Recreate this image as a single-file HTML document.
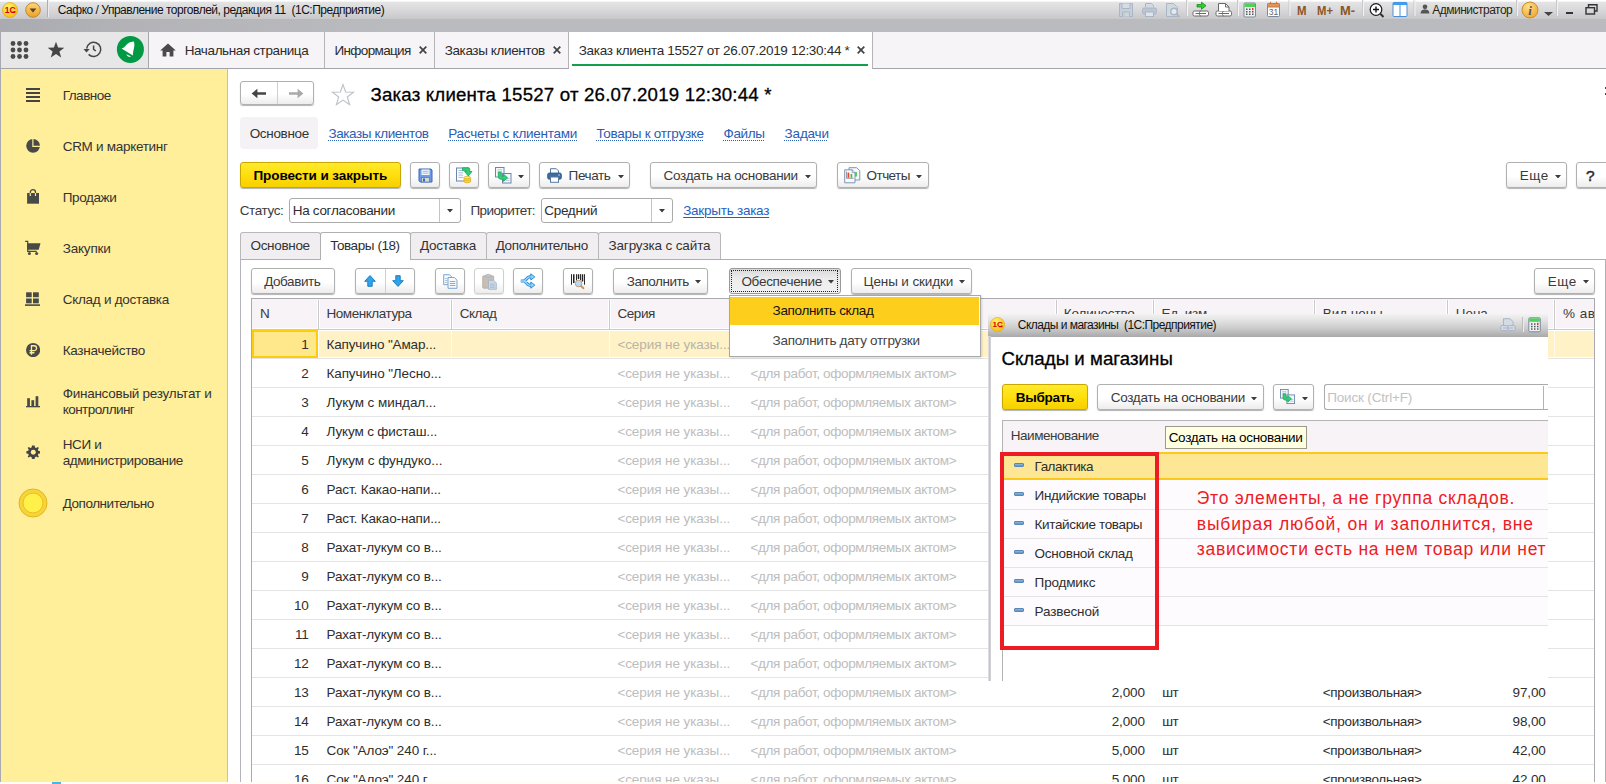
<!DOCTYPE html>
<html lang="ru"><head><meta charset="utf-8"><title>Заказ клиента 15527</title>
<style>
*{box-sizing:border-box;margin:0;padding:0}
html,body{width:1606px;height:784px;overflow:hidden;background:#fff}
body{position:relative;font-family:"Liberation Sans",sans-serif;font-size:13px;color:#2b2b2b}
.a{position:absolute}
.t{position:absolute;white-space:nowrap}
.sep{position:absolute;top:32px;width:1px;height:36px;background:#b5b5b5}
.btn{position:absolute;border:1px solid #b0b0b0;border-radius:3px;background:linear-gradient(#fff 0,#fff 55%,#eeeced 100%);box-shadow:0 1px 1px rgba(0,0,0,.30)}
.yb{background:linear-gradient(#ffea2e 0,#ffe010 45%,#f7d000 100%);border-color:#c9a700}
.inp{position:absolute;border:1px solid #ababab;border-radius:3px;background:#fff}
.rl{position:absolute;height:1px;background:#e4e4e4}
</style></head><body>
<div class="a" style="left:0px;top:0px;width:1606px;height:19px;background:linear-gradient(#fff 0,#fff 1.2px,#e4e4e5 2px,#d9d9db 50%,#c8c8cb 100%)"></div><div class="a" style="left:0px;top:18.5px;width:1606px;height:13.5px;background:linear-gradient(90deg,#a9abb0 0,#b4b4b8 150px,#babbbe 400px,#bbbbbf 100%)"></div><svg class="a" style="left:2px;top:2px" width="16" height="16" viewBox="0 0 16 16"><defs><radialGradient id="g1" cx=".4" cy=".3" r=".8"><stop offset="0" stop-color="#fff36a"/><stop offset="1" stop-color="#f5b90a"/></radialGradient></defs><circle cx="8" cy="8" r="7.5" fill="url(#g1)" stroke="#d9a200" stroke-width=".6"/><text x="8.200" y="10.900" font-family="Liberation Sans,sans-serif" font-weight="bold" font-size="8.500" text-anchor="middle" fill="#e00010" textLength="11" lengthAdjust="spacingAndGlyphs">1С</text><path d="M9.500 10.300 H13.300" stroke="#e00010" stroke-width="1.300"/></svg>
<svg class="a" style="left:25px;top:2px" width="16" height="16" viewBox="0 0 16 16"><defs><linearGradient id="g2" x1="0" y1="0" x2="0" y2="1"><stop offset="0" stop-color="#ffd57a"/><stop offset="1" stop-color="#eea020"/></linearGradient></defs><circle cx="8" cy="8" r="7.3" fill="url(#g2)" stroke="#b98a36" stroke-width="1"/><path d="M4.6 6.6 H11.4 L8 10.4 Z" fill="#5a4326"/></svg><div class="a" style="left:47px;top:0px;width:1px;height:17px;background:#adadb3;box-shadow:1px 0 0 #ececee"></div><div class="t" style="top:3.0px;font-size:12px;line-height:15px;letter-spacing:-0.488px;color:#111;left:57.8px;white-space:pre;">Сафко / Управление торговлей, редакция 11  (1С:Предприятие)</div><div class="a" style="left:0px;top:32px;width:1606px;height:37px;background:#f7f4f7;border-bottom:1px solid #a3a3aa"></div><div class="a" style="left:0px;top:32px;width:149px;height:36px;background:#e7e7e7;border-right:1px solid #a6a6ac;border-left:1px solid #a9a9b0"></div><svg class="a" style="left:10px;top:40px" width="20" height="20" viewBox="0 0 20 20" fill="#4a4a4a"><circle cx="3" cy="3.5" r="2.4"/><circle cx="9.5" cy="3.5" r="2.4"/><circle cx="16" cy="3.5" r="2.4"/><circle cx="3" cy="10" r="2.4"/><circle cx="9.5" cy="10" r="2.4"/><circle cx="16" cy="10" r="2.4"/><circle cx="3" cy="16.5" r="2.4"/><circle cx="9.5" cy="16.5" r="2.4"/><circle cx="16" cy="16.5" r="2.4"/></svg>
<svg class="a" style="left:47px;top:41px" width="18" height="18" viewBox="0 0 18 18"><path d="M9 0.8 L11.1 6.6 L17.3 6.8 L12.4 10.6 L14.2 16.6 L9 13.1 L3.8 16.6 L5.6 10.6 L0.7 6.8 L6.9 6.6 Z" fill="#444"/></svg>
<svg class="a" style="left:83px;top:39px" width="21" height="21" viewBox="0 0 21 21"><path d="M3.600 9.600 A7.100 7.100 0 1 1 5.600 15.400" fill="none" stroke="#454545" stroke-width="1.500"/><path d="M0.500 9.900 L6.700 9.900 L3.500 13.600 Z" fill="#454545"/><path d="M10.600 6.500 V10.400 L12.900 12" fill="none" stroke="#454545" stroke-width="1.500"/></svg>
<svg class="a" style="left:116px;top:35px" width="29" height="29" viewBox="0 0 29 29"><circle cx="14.400" cy="14.400" r="13.500" fill="#009a44"/><path d="M5.500 13.600 C8.500 13 10 9.500 12.500 8 C14.500 7 16 7.200 17 6.600 L18 6.800 C18.700 9.500 18.400 12 17.500 15 C17 17 16.900 19 16.900 20.600 Z" fill="#fff"/><path d="M10.400 19.200 C11.200 21.700 13.500 22.300 15.100 21.400 Z" fill="#fff"/></svg>
<svg class="a" style="left:160px;top:43px" width="16" height="14" viewBox="0 0 16 14"><path d="M8 0.4 L0.2 7.4 H2.6 V13.6 H6.4 V9 H9.6 V13.6 H13.4 V7.4 H15.8 Z" fill="#4a4a4a"/></svg><div class="t" style="top:42.0px;font-size:13.5px;line-height:17px;letter-spacing:-0.389px;color:#2b2b2b;left:184.7px;">Начальная страница</div><div class="sep" style="left:324px"></div><div class="t" style="top:42.0px;font-size:13.5px;line-height:17px;letter-spacing:-0.648px;color:#2b2b2b;left:334.5px;">Информация</div><svg class="a" style="left:418.5px;top:46px" width="8" height="8" viewBox="0 0 8 8"><path d="M0.7 0.7 L7.3 7.3 M7.3 0.7 L0.7 7.3" stroke="#444" stroke-width="1.7"/></svg><div class="sep" style="left:434px"></div><div class="t" style="top:42.0px;font-size:13.5px;line-height:17px;letter-spacing:-0.387px;color:#2b2b2b;left:444.7px;">Заказы клиентов</div><svg class="a" style="left:552.5px;top:46px" width="8" height="8" viewBox="0 0 8 8"><path d="M0.7 0.7 L7.3 7.3 M7.3 0.7 L0.7 7.3" stroke="#444" stroke-width="1.7"/></svg><div class="sep" style="left:568px"></div><div class="a" style="left:569px;top:32px;width:303px;height:37px;background:#fff"></div><div class="t" style="top:42.0px;font-size:13.5px;line-height:17px;letter-spacing:-0.304px;color:#2b2b2b;left:578.7px;">Заказ клиента 15527 от 26.07.2019 12:30:44 *</div><svg class="a" style="left:856.5px;top:46px" width="8" height="8" viewBox="0 0 8 8"><path d="M0.7 0.7 L7.3 7.3 M7.3 0.7 L0.7 7.3" stroke="#444" stroke-width="1.7"/></svg><div class="a" style="left:572px;top:64px;width:296px;height:2px;background:#13a04d"></div><div class="sep" style="left:872px;height:37px"></div><div class="a" style="left:0px;top:69px;width:228px;height:712.5px;background:#ffee9a;border-left:1px solid #a9a9b0;border-right:1px solid #d3c47e"></div><svg class="a" style="left:26px;top:88px" width="14" height="14" viewBox="0 0 14 14" fill="#444"><rect y="0" width="14" height="2"/><rect y="4" width="14" height="2"/><rect y="8" width="14" height="2"/><rect y="12" width="14" height="2"/></svg>
<svg class="a" style="left:25px;top:138px" width="16" height="16" viewBox="0 0 16 16"><circle cx="8.100" cy="7.800" r="6.900" fill="#484a48"/><path d="M7.900 0.500 V8.400 H15.500" fill="none" stroke="#ffee9a" stroke-width="1.200"/></svg>
<svg class="a" style="left:26px;top:188px" width="14" height="17" viewBox="0 0 14 17"><path d="M1.100 5 H13 V15.700 H1.100 Z" fill="#484a48"/><path d="M4.300 5 V4.200 A2.600 2.600 0 0 1 9.500 4.200 V5" fill="none" stroke="#484a48" stroke-width="1.300"/><path d="M4.300 5 V8 M9.500 5 V8" stroke="#ffee9a" stroke-width="1.200"/></svg>
<svg class="a" style="left:24px;top:240px" width="18" height="16" viewBox="0 0 18 16"><path d="M1.100 1.400 H3.700 V11.400 H12.700" fill="none" stroke="#484a48" stroke-width="1.200"/><path d="M3.200 3.200 H16.500 L14.700 9.800 H3.200 Z" fill="#484a48"/><circle cx="5.400" cy="13.600" r="1.500" fill="#484a48"/><circle cx="12.600" cy="13.600" r="1.500" fill="#484a48"/></svg>
<svg class="a" style="left:25px;top:292px" width="16" height="15" viewBox="0 0 16 15" fill="#484a48"><rect x="1.100" y="0.300" width="5.600" height="4.900"/><rect x="8" y="0.300" width="5.800" height="4.900"/><rect x="1.100" y="6.500" width="5.600" height="4.800"/><rect x="8" y="6.500" width="5.800" height="4.800"/><rect x="0" y="12.300" width="15" height="1.600"/></svg>
<svg class="a" style="left:26px;top:342.800px" width="14.200" height="14.200" viewBox="0 0 14 14"><circle cx="7" cy="7" r="7" fill="#484a48"/><path d="M5.400 11.700 V2.700 H8 A2.400 2.400 0 0 1 8 7.500 H3.500 M3.500 9.600 H8.300" fill="none" stroke="#ffee9a" stroke-width="1.300"/></svg>
<svg class="a" style="left:26px;top:395px" width="14" height="13" viewBox="0 0 14 13" fill="#484a48"><rect x="1.200" y="3.200" width="2.700" height="8.400"/><rect x="5.400" y="5.200" width="2.700" height="6.400"/><rect x="9.600" y="1.200" width="2.700" height="10.400"/><rect x="0" y="11" width="14" height="1.300"/></svg>
<svg class="a" style="left:25.700px;top:444.600px" width="14.600" height="14.600" viewBox="0 0 16 16"><path d="M6.6 0.6 H9.4 L9.9 2.7 L11.2 3.3 L13.1 2.2 L14.1 3.2 L13 5 L13.5 6.3 L15.6 6.8 V9.2 L13.5 9.7 L13 11 L14.1 12.8 L13.1 13.8 L11.2 12.7 L9.9 13.3 L9.4 15.4 H6.6 L6.1 13.3 L4.8 12.7 L2.9 13.8 L1.9 12.8 L3 11 L2.5 9.7 L0.4 9.2 V6.8 L2.5 6.3 L3 5 L1.9 3.2 L2.9 2.2 L4.8 3.3 L6.1 2.7 Z" fill="#444"/><circle cx="8" cy="8" r="2.7" fill="#ffee9a"/></svg>
<svg class="a" style="left:18.200px;top:488px" width="30" height="30" viewBox="0 0 30 30"><circle cx="15" cy="15" r="14" fill="#f7d43a" stroke="#e2b61e" stroke-width="1"/><circle cx="15" cy="15" r="10" fill="#fff04a" stroke="#e9bf20" stroke-width="1"/></svg><div class="t" style="top:87.0px;font-size:13.5px;line-height:17px;letter-spacing:-0.496px;color:#333;left:62.7px;">Главное</div><div class="t" style="top:138.0px;font-size:13.5px;line-height:17px;letter-spacing:-0.292px;color:#333;left:62.7px;">CRM и маркетинг</div><div class="t" style="top:189.0px;font-size:13.5px;line-height:17px;letter-spacing:-0.378px;color:#333;left:62.7px;">Продажи</div><div class="t" style="top:240.0px;font-size:13.5px;line-height:17px;letter-spacing:-0.186px;color:#333;left:62.7px;">Закупки</div><div class="t" style="top:291.0px;font-size:13.5px;line-height:17px;letter-spacing:-0.270px;color:#333;left:62.7px;">Склад и доставка</div><div class="t" style="top:342.0px;font-size:13.5px;line-height:17px;letter-spacing:-0.273px;color:#333;left:62.7px;">Казначейство</div><div class="t" style="top:385.0px;font-size:13.5px;line-height:17px;letter-spacing:-0.261px;color:#333;left:62.7px;">Финансовый результат и</div><div class="t" style="top:401.0px;font-size:13.5px;line-height:17px;letter-spacing:-0.549px;color:#333;left:62.7px;">контроллинг</div><div class="t" style="top:436.0px;font-size:13.5px;line-height:17px;letter-spacing:-0.345px;color:#333;left:62.7px;">НСИ и</div><div class="t" style="top:452.0px;font-size:13.5px;line-height:17px;letter-spacing:-0.414px;color:#333;left:62.7px;">администрирование</div><div class="t" style="top:495.0px;font-size:13.5px;line-height:17px;letter-spacing:-0.463px;color:#333;left:62.7px;">Дополнительно</div><div class="btn" style="left:240px;top:81px;width:74px;height:24px;"></div><div class="a" style="left:277px;top:82px;width:1px;height:22px;background:#cfcfcf"></div><svg class="a" style="left:251px;top:88px" width="16" height="11" viewBox="0 0 16 11"><path d="M0.6 5.5 L6.4 0.8 V4.2 H15 V6.8 H6.4 V10.2 Z" fill="#454545"/></svg>
<svg class="a" style="left:288px;top:88px" width="16" height="11" viewBox="0 0 16 11"><path d="M15.4 5.5 L9.6 0.8 V4.2 H1 V6.8 H9.6 V10.2 Z" fill="#a9a9a9"/></svg>
<svg class="a" style="left:331px;top:83px" width="24" height="23" viewBox="0 0 24 23"><path d="M12 1.6 L14.6 9 L22.6 9.2 L16.3 14 L18.6 21.6 L12 17.1 L5.4 21.6 L7.7 14 L1.4 9.2 L9.4 9 Z" fill="#fff" stroke="#b9c1c9" stroke-width="1.1" stroke-linejoin="miter"/></svg><div class="t" style="top:83.0px;font-size:18.67px;line-height:23px;letter-spacing:0.190px;color:#000;left:370.5px;-webkit-text-stroke:.3px #000;">Заказ клиента 15527 от 26.07.2019 12:30:44 *</div><div class="a" style="left:240px;top:116.5px;width:78px;height:32.5px;background:#f5f2f5;border-radius:4px"></div><div class="t" style="top:125.0px;font-size:13.5px;line-height:17px;letter-spacing:-0.320px;color:#333;left:249.7px;">Основное</div><div class="t" style="top:125.0px;font-size:13.5px;line-height:17px;letter-spacing:-0.387px;color:#2a5db5;left:328.4px;text-decoration:underline dotted;text-underline-offset:2px;text-decoration-thickness:1px;">Заказы клиентов</div><div class="t" style="top:125.0px;font-size:13.5px;line-height:17px;letter-spacing:-0.260px;color:#2a5db5;left:448.3px;text-decoration:underline dotted;text-underline-offset:2px;text-decoration-thickness:1px;">Расчеты с клиентами</div><div class="t" style="top:125.0px;font-size:13.5px;line-height:17px;letter-spacing:-0.269px;color:#2a5db5;left:596.4px;text-decoration:underline dotted;text-underline-offset:2px;text-decoration-thickness:1px;">Товары к отгрузке</div><div class="t" style="top:125.0px;font-size:13.5px;line-height:17px;letter-spacing:-0.372px;color:#2a5db5;left:723.5px;text-decoration:underline dotted;text-underline-offset:2px;text-decoration-thickness:1px;">Файлы</div><div class="t" style="top:125.0px;font-size:13.5px;line-height:17px;letter-spacing:-0.182px;color:#2a5db5;left:784.6px;text-decoration:underline dotted;text-underline-offset:2px;text-decoration-thickness:1px;">Задачи</div><div class="btn yb" style="left:240px;top:162px;width:161px;height:26px;"></div><div class="t" style="top:167.0px;font-size:13.5px;line-height:17px;letter-spacing:-0.096px;color:#000;font-weight:bold;left:253.5px;">Провести и закрыть</div><div class="btn" style="left:410px;top:162px;width:30px;height:26px;"></div><div class="btn" style="left:449px;top:162px;width:30px;height:26px;"></div><div class="btn" style="left:488px;top:162px;width:42px;height:26px;"></div><svg class="a" style="left:517.5px;top:174.8px" width="6" height="3.5" viewBox="0 0 6 3.5"><path d="M0 0 H6 L3 3.5 Z" fill="#3c3c3c"/></svg><div class="btn" style="left:539px;top:162px;width:91px;height:26px;"></div><div class="t" style="top:167.0px;font-size:13.5px;line-height:17px;letter-spacing:-0.403px;color:#3a3a3a;left:568.6px;">Печать</div><svg class="a" style="left:617.5px;top:174.8px" width="6" height="3.5" viewBox="0 0 6 3.5"><path d="M0 0 H6 L3 3.5 Z" fill="#3c3c3c"/></svg><div class="btn" style="left:650px;top:162px;width:167px;height:26px;"></div><div class="t" style="top:167.0px;font-size:13.5px;line-height:17px;letter-spacing:-0.292px;color:#3a3a3a;left:663.6px;">Создать на основании</div><svg class="a" style="left:804.5px;top:174.8px" width="6" height="3.5" viewBox="0 0 6 3.5"><path d="M0 0 H6 L3 3.5 Z" fill="#3c3c3c"/></svg><div class="btn" style="left:837px;top:162px;width:92px;height:26px;"></div><div class="t" style="top:167.0px;font-size:13.5px;line-height:17px;letter-spacing:-0.570px;color:#3a3a3a;left:866.6px;">Отчеты</div><svg class="a" style="left:916.3px;top:174.8px" width="6" height="3.5" viewBox="0 0 6 3.5"><path d="M0 0 H6 L3 3.5 Z" fill="#3c3c3c"/></svg><div class="btn" style="left:1506px;top:162px;width:61px;height:26px;"></div><div class="t" style="top:167.0px;font-size:13.5px;line-height:17px;letter-spacing:0.526px;color:#3a3a3a;left:1519.7px;">Еще</div><svg class="a" style="left:1554.6px;top:174.8px" width="6" height="3.5" viewBox="0 0 6 3.5"><path d="M0 0 H6 L3 3.5 Z" fill="#3c3c3c"/></svg><div class="btn" style="left:1576px;top:162px;width:36px;height:26px;"></div><div class="t" style="top:166.0px;font-size:15.5px;line-height:19px;letter-spacing:0.000px;color:#2e2e2e;left:1586.1px;-webkit-text-stroke:.45px #222;">?</div><div class="t" style="top:202.0px;font-size:13.5px;line-height:17px;letter-spacing:-0.386px;color:#3a3a3a;left:239.7px;">Статус:</div><div class="inp" style="left:289px;top:198px;width:172px;height:25px;"></div><div class="a" style="left:439px;top:199px;width:1px;height:23px;background:#c4c4c4"></div><svg class="a" style="left:447px;top:209.3px" width="6" height="3.5" viewBox="0 0 6 3.5"><path d="M0 0 H6 L3 3.5 Z" fill="#3c3c3c"/></svg><div class="t" style="top:202.0px;font-size:13.5px;line-height:17px;letter-spacing:-0.320px;color:#2e2e2e;left:292.8px;">На согласовании</div><div class="t" style="top:202.0px;font-size:13.5px;line-height:17px;letter-spacing:-0.569px;color:#3a3a3a;left:470.4px;">Приоритет:</div><div class="inp" style="left:541px;top:198px;width:132px;height:25px;"></div><div class="a" style="left:651px;top:199px;width:1px;height:23px;background:#c4c4c4"></div><svg class="a" style="left:659px;top:209.3px" width="6" height="3.5" viewBox="0 0 6 3.5"><path d="M0 0 H6 L3 3.5 Z" fill="#3c3c3c"/></svg><div class="t" style="top:202.0px;font-size:13.5px;line-height:17px;letter-spacing:-0.262px;color:#2e2e2e;left:544.2px;">Средний</div><div class="t" style="top:202.0px;font-size:13.5px;line-height:17px;letter-spacing:-0.249px;color:#1f5fc4;left:683.2px;text-decoration:underline;text-underline-offset:2px;">Закрыть заказ</div><div class="a" style="left:240px;top:259px;width:1366px;height:1px;background:#b0b0b0"></div><div class="a" style="left:240px;top:259px;width:1px;height:523px;background:#b4b4bc"></div><div class="a" style="left:1605px;top:259px;width:1px;height:523px;background:#b0b0b0"></div><div class="a" style="left:1604.5px;top:87px;width:1.5px;height:1.5px;background:#444"></div><div class="a" style="left:1604.5px;top:93px;width:1.5px;height:1.5px;background:#444"></div><div class="a" style="left:240px;top:232px;width:81px;height:27px;background:#f1eef1;border:1px solid #b8b8b8;border-bottom:none;border-radius:3px 3px 0 0;"></div><div class="t" style="top:237.0px;font-size:13.5px;line-height:17px;letter-spacing:-0.320px;color:#333;left:250.5px;">Основное</div><div class="a" style="left:410px;top:232px;width:77px;height:27px;background:#f1eef1;border:1px solid #b8b8b8;border-bottom:none;border-radius:3px 3px 0 0;"></div><div class="t" style="top:237.0px;font-size:13.5px;line-height:17px;letter-spacing:-0.252px;color:#333;left:420.0px;">Доставка</div><div class="a" style="left:486px;top:232px;width:113px;height:27px;background:#f1eef1;border:1px solid #b8b8b8;border-bottom:none;border-radius:3px 3px 0 0;"></div><div class="t" style="top:237.0px;font-size:13.5px;line-height:17px;letter-spacing:-0.388px;color:#333;left:495.7px;">Дополнительно</div><div class="a" style="left:598px;top:232px;width:123px;height:27px;background:#f1eef1;border:1px solid #b8b8b8;border-bottom:none;border-radius:3px 3px 0 0;"></div><div class="t" style="top:237.0px;font-size:13.5px;line-height:17px;letter-spacing:-0.144px;color:#333;left:608.5px;">Загрузка с сайта</div><div class="a" style="left:320px;top:232px;width:91px;height:28px;background:#fff;border:1px solid #b0b0b0;border-bottom:none;border-radius:3px 3px 0 0;"></div><div class="t" style="top:237.0px;font-size:13.5px;line-height:17px;letter-spacing:-0.428px;color:#2e2e2e;left:330.2px;">Товары (18)</div><div class="btn" style="left:251px;top:268px;width:83.5px;height:25.5px;"></div><div class="t" style="top:273.0px;font-size:13.5px;line-height:17px;letter-spacing:-0.436px;color:#3a3a3a;left:264.2px;">Добавить</div><div class="btn" style="left:355px;top:268px;width:59.5px;height:25.5px;"></div><div class="a" style="left:384.5px;top:269px;width:1px;height:24px;background:#cfcfcf"></div><div class="btn" style="left:435px;top:268px;width:29.5px;height:25.5px;"></div><div class="btn" style="left:474px;top:268px;width:29.5px;height:25.5px;border-color:#d0d0d0;box-shadow:0 1px 1px rgba(0,0,0,.12)"></div><div class="btn" style="left:513px;top:268px;width:29.5px;height:25.5px;"></div><div class="btn" style="left:563px;top:268px;width:29.5px;height:25.5px;"></div><div class="btn" style="left:613px;top:268px;width:94.5px;height:25.5px;"></div><div class="t" style="top:273.0px;font-size:13.5px;line-height:17px;letter-spacing:-0.483px;color:#3a3a3a;left:626.8px;">Заполнить</div><svg class="a" style="left:695.4px;top:280.3px" width="6" height="3.5" viewBox="0 0 6 3.5"><path d="M0 0 H6 L3 3.5 Z" fill="#3c3c3c"/></svg><div class="a" style="left:728.5px;top:267.5px;width:112px;height:26.5px;border:1px solid #9a9a9a;border-radius:3px;background:linear-gradient(#d9d9d9,#ececec 40%,#f2f2f2)"></div><div class="a" style="left:731px;top:270px;width:107px;height:21.5px;border:1px dotted #222"></div><div class="t" style="top:273.0px;font-size:13.5px;line-height:17px;letter-spacing:-0.285px;color:#3a3a3a;left:741.4px;">Обеспечение</div><svg class="a" style="left:828.2px;top:280.3px" width="6" height="3.5" viewBox="0 0 6 3.5"><path d="M0 0 H6 L3 3.5 Z" fill="#3c3c3c"/></svg><div class="btn" style="left:850.5px;top:268px;width:121px;height:25.5px;"></div><div class="t" style="top:273.0px;font-size:13.5px;line-height:17px;letter-spacing:-0.125px;color:#3a3a3a;left:863.6px;">Цены и скидки</div><svg class="a" style="left:959.4px;top:280.3px" width="6" height="3.5" viewBox="0 0 6 3.5"><path d="M0 0 H6 L3 3.5 Z" fill="#3c3c3c"/></svg><div class="btn" style="left:1534px;top:268px;width:61px;height:25.5px;"></div><div class="t" style="top:273.0px;font-size:13.5px;line-height:17px;letter-spacing:0.526px;color:#3a3a3a;left:1547.7px;">Еще</div><svg class="a" style="left:1582.6px;top:280.3px" width="6" height="3.5" viewBox="0 0 6 3.5"><path d="M0 0 H6 L3 3.5 Z" fill="#3c3c3c"/></svg><div class="a" style="left:251px;top:298px;width:1344px;height:32px;background:#f7f3f7;border:1px solid #a9a9b1;border-bottom:1px solid #cbcbcb;box-shadow:inset 0 -1px 0 #fff"></div><div class="a" style="left:251px;top:329px;width:1px;height:453px;background:#a9a9b1"></div><div class="a" style="left:1594px;top:329px;width:1px;height:453px;background:#a9a9b1"></div><div class="a" style="left:317.5px;top:300px;width:1px;height:29px;background:#c9c9c9;box-shadow:1px 0 0 #fff,-1px 0 0 #fff"></div><div class="a" style="left:450.5px;top:300px;width:1px;height:29px;background:#c9c9c9;box-shadow:1px 0 0 #fff,-1px 0 0 #fff"></div><div class="a" style="left:609px;top:300px;width:1px;height:29px;background:#c9c9c9;box-shadow:1px 0 0 #fff,-1px 0 0 #fff"></div><div class="a" style="left:741.5px;top:300px;width:1px;height:29px;background:#c9c9c9;box-shadow:1px 0 0 #fff,-1px 0 0 #fff"></div><div class="a" style="left:1056px;top:300px;width:1px;height:29px;background:#c9c9c9;box-shadow:1px 0 0 #fff,-1px 0 0 #fff"></div><div class="a" style="left:1153px;top:300px;width:1px;height:29px;background:#c9c9c9;box-shadow:1px 0 0 #fff,-1px 0 0 #fff"></div><div class="a" style="left:1314px;top:300px;width:1px;height:29px;background:#c9c9c9;box-shadow:1px 0 0 #fff,-1px 0 0 #fff"></div><div class="a" style="left:1447px;top:300px;width:1px;height:29px;background:#c9c9c9;box-shadow:1px 0 0 #fff,-1px 0 0 #fff"></div><div class="a" style="left:1554px;top:300px;width:1px;height:29px;background:#c9c9c9;box-shadow:1px 0 0 #fff,-1px 0 0 #fff"></div><div class="t" style="top:305.0px;font-size:13.5px;line-height:17px;letter-spacing:-0.150px;color:#3a3a3a;left:260.0px;">N</div><div class="t" style="top:305.0px;font-size:13.5px;line-height:17px;letter-spacing:-0.454px;color:#3a3a3a;left:326.5px;">Номенклатура</div><div class="t" style="top:305.0px;font-size:13.5px;line-height:17px;letter-spacing:-0.490px;color:#3a3a3a;left:459.7px;">Склад</div><div class="t" style="top:305.0px;font-size:13.5px;line-height:17px;letter-spacing:-0.426px;color:#3a3a3a;left:617.4px;">Серия</div><div class="t" style="top:305.0px;font-size:13.5px;line-height:17px;letter-spacing:-0.164px;color:#3a3a3a;left:1063.8px;">Количество</div><div class="t" style="top:305.0px;font-size:13.5px;line-height:17px;letter-spacing:-0.248px;color:#3a3a3a;left:1161.4px;">Ед. изм.</div><div class="t" style="top:305.0px;font-size:13.5px;line-height:17px;letter-spacing:-0.057px;color:#3a3a3a;left:1322.8px;">Вид цены</div><div class="t" style="top:305.0px;font-size:13.5px;line-height:17px;letter-spacing:-0.116px;color:#3a3a3a;left:1455.7px;">Цена</div><div class="t" style="top:305.0px;font-size:13.5px;line-height:17px;letter-spacing:0.523px;color:#3a3a3a;left:1562.9px;width:31.2px;overflow:hidden;">% авт</div><div class="a" style="left:319px;top:331px;width:1275px;height:26px;background:#fff2c6"></div><div class="a" style="left:450.5px;top:331px;width:1px;height:26px;background:#fffaea"></div><div class="a" style="left:609px;top:331px;width:1px;height:26px;background:#fffaea"></div><div class="a" style="left:741.5px;top:331px;width:1px;height:26px;background:#fffaea"></div><div class="a" style="left:1056px;top:331px;width:1px;height:26px;background:#fffaea"></div><div class="a" style="left:1153px;top:331px;width:1px;height:26px;background:#fffaea"></div><div class="a" style="left:1314px;top:331px;width:1px;height:26px;background:#fffaea"></div><div class="a" style="left:1447px;top:331px;width:1px;height:26px;background:#fffaea"></div><div class="a" style="left:1554px;top:331px;width:1px;height:26px;background:#fffaea"></div><div class="a" style="left:252px;top:330px;width:66px;height:28px;background:#ffe88c;border:2px solid #ffcc0a"></div><div class="rl" style="left:252px;top:358px;width:1342px"></div><div class="rl" style="left:252px;top:387px;width:1342px"></div><div class="rl" style="left:252px;top:416px;width:1342px"></div><div class="rl" style="left:252px;top:445px;width:1342px"></div><div class="rl" style="left:252px;top:474px;width:1342px"></div><div class="rl" style="left:252px;top:503px;width:1342px"></div><div class="rl" style="left:252px;top:532px;width:1342px"></div><div class="rl" style="left:252px;top:561px;width:1342px"></div><div class="rl" style="left:252px;top:590px;width:1342px"></div><div class="rl" style="left:252px;top:619px;width:1342px"></div><div class="rl" style="left:252px;top:648px;width:1342px"></div><div class="rl" style="left:252px;top:677px;width:1342px"></div><div class="rl" style="left:252px;top:706px;width:1342px"></div><div class="rl" style="left:252px;top:735px;width:1342px"></div><div class="rl" style="left:252px;top:764px;width:1342px"></div><div class="rl" style="left:252px;top:793px;width:1342px"></div><div class="t" style="top:336.0px;font-size:13.5px;line-height:17px;letter-spacing:-0.150px;color:#2e2e2e;right:1297.4px;">1</div><div class="t" style="top:336.0px;font-size:13.5px;line-height:17px;letter-spacing:-0.141px;color:#2e2e2e;left:326.5px;">Капучино "Амар...</div><div class="t" style="top:336.0px;font-size:13.5px;line-height:17px;letter-spacing:-0.088px;color:#b9b4a6;left:617.4px;">&lt;серия не указы...</div><div class="t" style="top:365.0px;font-size:13.5px;line-height:17px;letter-spacing:-0.150px;color:#2e2e2e;right:1297.4px;">2</div><div class="t" style="top:365.0px;font-size:13.5px;line-height:17px;letter-spacing:-0.114px;color:#2e2e2e;left:326.5px;">Капучино "Лесно...</div><div class="t" style="top:365.0px;font-size:13.5px;line-height:17px;letter-spacing:-0.088px;color:#bdbdbd;left:617.4px;">&lt;серия не указы...</div><div class="t" style="top:365.0px;font-size:13.5px;line-height:17px;letter-spacing:-0.348px;color:#bdbdbd;left:750.4px;">&lt;для работ, оформляемых актом&gt;</div><div class="t" style="top:394.0px;font-size:13.5px;line-height:17px;letter-spacing:-0.150px;color:#2e2e2e;right:1297.4px;">3</div><div class="t" style="top:394.0px;font-size:13.5px;line-height:17px;letter-spacing:-0.058px;color:#2e2e2e;left:326.5px;">Лукум с миндал...</div><div class="t" style="top:394.0px;font-size:13.5px;line-height:17px;letter-spacing:-0.088px;color:#bdbdbd;left:617.4px;">&lt;серия не указы...</div><div class="t" style="top:394.0px;font-size:13.5px;line-height:17px;letter-spacing:-0.348px;color:#bdbdbd;left:750.4px;">&lt;для работ, оформляемых актом&gt;</div><div class="t" style="top:423.0px;font-size:13.5px;line-height:17px;letter-spacing:-0.150px;color:#2e2e2e;right:1297.4px;">4</div><div class="t" style="top:423.0px;font-size:13.5px;line-height:17px;letter-spacing:-0.135px;color:#2e2e2e;left:326.5px;">Лукум с фисташ...</div><div class="t" style="top:423.0px;font-size:13.5px;line-height:17px;letter-spacing:-0.088px;color:#bdbdbd;left:617.4px;">&lt;серия не указы...</div><div class="t" style="top:423.0px;font-size:13.5px;line-height:17px;letter-spacing:-0.348px;color:#bdbdbd;left:750.4px;">&lt;для работ, оформляемых актом&gt;</div><div class="t" style="top:452.0px;font-size:13.5px;line-height:17px;letter-spacing:-0.150px;color:#2e2e2e;right:1297.4px;">5</div><div class="t" style="top:452.0px;font-size:13.5px;line-height:17px;letter-spacing:-0.038px;color:#2e2e2e;left:326.5px;">Лукум с фундуко...</div><div class="t" style="top:452.0px;font-size:13.5px;line-height:17px;letter-spacing:-0.088px;color:#bdbdbd;left:617.4px;">&lt;серия не указы...</div><div class="t" style="top:452.0px;font-size:13.5px;line-height:17px;letter-spacing:-0.348px;color:#bdbdbd;left:750.4px;">&lt;для работ, оформляемых актом&gt;</div><div class="t" style="top:481.0px;font-size:13.5px;line-height:17px;letter-spacing:-0.150px;color:#2e2e2e;right:1297.4px;">6</div><div class="t" style="top:481.0px;font-size:13.5px;line-height:17px;letter-spacing:-0.141px;color:#2e2e2e;left:326.5px;">Раст. Какао-напи...</div><div class="t" style="top:481.0px;font-size:13.5px;line-height:17px;letter-spacing:-0.088px;color:#bdbdbd;left:617.4px;">&lt;серия не указы...</div><div class="t" style="top:481.0px;font-size:13.5px;line-height:17px;letter-spacing:-0.348px;color:#bdbdbd;left:750.4px;">&lt;для работ, оформляемых актом&gt;</div><div class="t" style="top:510.0px;font-size:13.5px;line-height:17px;letter-spacing:-0.150px;color:#2e2e2e;right:1297.4px;">7</div><div class="t" style="top:510.0px;font-size:13.5px;line-height:17px;letter-spacing:-0.141px;color:#2e2e2e;left:326.5px;">Раст. Какао-напи...</div><div class="t" style="top:510.0px;font-size:13.5px;line-height:17px;letter-spacing:-0.088px;color:#bdbdbd;left:617.4px;">&lt;серия не указы...</div><div class="t" style="top:510.0px;font-size:13.5px;line-height:17px;letter-spacing:-0.348px;color:#bdbdbd;left:750.4px;">&lt;для работ, оформляемых актом&gt;</div><div class="t" style="top:539.0px;font-size:13.5px;line-height:17px;letter-spacing:-0.150px;color:#2e2e2e;right:1297.4px;">8</div><div class="t" style="top:539.0px;font-size:13.5px;line-height:17px;letter-spacing:-0.119px;color:#2e2e2e;left:326.5px;">Рахат-лукум со в...</div><div class="t" style="top:539.0px;font-size:13.5px;line-height:17px;letter-spacing:-0.088px;color:#bdbdbd;left:617.4px;">&lt;серия не указы...</div><div class="t" style="top:539.0px;font-size:13.5px;line-height:17px;letter-spacing:-0.348px;color:#bdbdbd;left:750.4px;">&lt;для работ, оформляемых актом&gt;</div><div class="t" style="top:568.0px;font-size:13.5px;line-height:17px;letter-spacing:-0.150px;color:#2e2e2e;right:1297.4px;">9</div><div class="t" style="top:568.0px;font-size:13.5px;line-height:17px;letter-spacing:-0.119px;color:#2e2e2e;left:326.5px;">Рахат-лукум со в...</div><div class="t" style="top:568.0px;font-size:13.5px;line-height:17px;letter-spacing:-0.088px;color:#bdbdbd;left:617.4px;">&lt;серия не указы...</div><div class="t" style="top:568.0px;font-size:13.5px;line-height:17px;letter-spacing:-0.348px;color:#bdbdbd;left:750.4px;">&lt;для работ, оформляемых актом&gt;</div><div class="t" style="top:597.0px;font-size:13.5px;line-height:17px;letter-spacing:-0.150px;color:#2e2e2e;right:1297.4px;">10</div><div class="t" style="top:597.0px;font-size:13.5px;line-height:17px;letter-spacing:-0.119px;color:#2e2e2e;left:326.5px;">Рахат-лукум со в...</div><div class="t" style="top:597.0px;font-size:13.5px;line-height:17px;letter-spacing:-0.088px;color:#bdbdbd;left:617.4px;">&lt;серия не указы...</div><div class="t" style="top:597.0px;font-size:13.5px;line-height:17px;letter-spacing:-0.348px;color:#bdbdbd;left:750.4px;">&lt;для работ, оформляемых актом&gt;</div><div class="t" style="top:626.0px;font-size:13.5px;line-height:17px;letter-spacing:-0.150px;color:#2e2e2e;right:1297.4px;">11</div><div class="t" style="top:626.0px;font-size:13.5px;line-height:17px;letter-spacing:-0.119px;color:#2e2e2e;left:326.5px;">Рахат-лукум со в...</div><div class="t" style="top:626.0px;font-size:13.5px;line-height:17px;letter-spacing:-0.088px;color:#bdbdbd;left:617.4px;">&lt;серия не указы...</div><div class="t" style="top:626.0px;font-size:13.5px;line-height:17px;letter-spacing:-0.348px;color:#bdbdbd;left:750.4px;">&lt;для работ, оформляемых актом&gt;</div><div class="t" style="top:655.0px;font-size:13.5px;line-height:17px;letter-spacing:-0.150px;color:#2e2e2e;right:1297.4px;">12</div><div class="t" style="top:655.0px;font-size:13.5px;line-height:17px;letter-spacing:-0.119px;color:#2e2e2e;left:326.5px;">Рахат-лукум со в...</div><div class="t" style="top:655.0px;font-size:13.5px;line-height:17px;letter-spacing:-0.088px;color:#bdbdbd;left:617.4px;">&lt;серия не указы...</div><div class="t" style="top:655.0px;font-size:13.5px;line-height:17px;letter-spacing:-0.348px;color:#bdbdbd;left:750.4px;">&lt;для работ, оформляемых актом&gt;</div><div class="t" style="top:684.0px;font-size:13.5px;line-height:17px;letter-spacing:-0.150px;color:#2e2e2e;right:1297.4px;">13</div><div class="t" style="top:684.0px;font-size:13.5px;line-height:17px;letter-spacing:-0.119px;color:#2e2e2e;left:326.5px;">Рахат-лукум со в...</div><div class="t" style="top:684.0px;font-size:13.5px;line-height:17px;letter-spacing:-0.088px;color:#bdbdbd;left:617.4px;">&lt;серия не указы...</div><div class="t" style="top:684.0px;font-size:13.5px;line-height:17px;letter-spacing:-0.348px;color:#bdbdbd;left:750.4px;">&lt;для работ, оформляемых актом&gt;</div><div class="t" style="top:684.0px;font-size:13.5px;line-height:17px;letter-spacing:-0.150px;color:#2e2e2e;right:461.2px;">2,000</div><div class="t" style="top:684.0px;font-size:13.5px;line-height:17px;letter-spacing:-0.396px;color:#2e2e2e;left:1162.2px;">шт</div><div class="t" style="top:684.0px;font-size:13.5px;line-height:17px;letter-spacing:-0.325px;color:#2e2e2e;left:1322.8px;">&lt;произвольная&gt;</div><div class="t" style="top:684.0px;font-size:13.5px;line-height:17px;letter-spacing:-0.150px;color:#2e2e2e;right:60.4px;">97,00</div><div class="t" style="top:713.0px;font-size:13.5px;line-height:17px;letter-spacing:-0.150px;color:#2e2e2e;right:1297.4px;">14</div><div class="t" style="top:713.0px;font-size:13.5px;line-height:17px;letter-spacing:-0.119px;color:#2e2e2e;left:326.5px;">Рахат-лукум со в...</div><div class="t" style="top:713.0px;font-size:13.5px;line-height:17px;letter-spacing:-0.088px;color:#bdbdbd;left:617.4px;">&lt;серия не указы...</div><div class="t" style="top:713.0px;font-size:13.5px;line-height:17px;letter-spacing:-0.348px;color:#bdbdbd;left:750.4px;">&lt;для работ, оформляемых актом&gt;</div><div class="t" style="top:713.0px;font-size:13.5px;line-height:17px;letter-spacing:-0.150px;color:#2e2e2e;right:461.2px;">2,000</div><div class="t" style="top:713.0px;font-size:13.5px;line-height:17px;letter-spacing:-0.396px;color:#2e2e2e;left:1162.2px;">шт</div><div class="t" style="top:713.0px;font-size:13.5px;line-height:17px;letter-spacing:-0.325px;color:#2e2e2e;left:1322.8px;">&lt;произвольная&gt;</div><div class="t" style="top:713.0px;font-size:13.5px;line-height:17px;letter-spacing:-0.150px;color:#2e2e2e;right:60.4px;">98,00</div><div class="t" style="top:742.0px;font-size:13.5px;line-height:17px;letter-spacing:-0.150px;color:#2e2e2e;right:1297.4px;">15</div><div class="t" style="top:742.0px;font-size:13.5px;line-height:17px;letter-spacing:-0.120px;color:#2e2e2e;left:326.5px;">Сок "Алоэ" 240 г...</div><div class="t" style="top:742.0px;font-size:13.5px;line-height:17px;letter-spacing:-0.088px;color:#bdbdbd;left:617.4px;">&lt;серия не указы...</div><div class="t" style="top:742.0px;font-size:13.5px;line-height:17px;letter-spacing:-0.348px;color:#bdbdbd;left:750.4px;">&lt;для работ, оформляемых актом&gt;</div><div class="t" style="top:742.0px;font-size:13.5px;line-height:17px;letter-spacing:-0.150px;color:#2e2e2e;right:461.2px;">5,000</div><div class="t" style="top:742.0px;font-size:13.5px;line-height:17px;letter-spacing:-0.396px;color:#2e2e2e;left:1162.2px;">шт</div><div class="t" style="top:742.0px;font-size:13.5px;line-height:17px;letter-spacing:-0.325px;color:#2e2e2e;left:1322.8px;">&lt;произвольная&gt;</div><div class="t" style="top:742.0px;font-size:13.5px;line-height:17px;letter-spacing:-0.150px;color:#2e2e2e;right:60.4px;">42,00</div><div class="t" style="top:771.0px;font-size:13.5px;line-height:17px;letter-spacing:-0.150px;color:#2e2e2e;right:1297.4px;">16</div><div class="t" style="top:771.0px;font-size:13.5px;line-height:17px;letter-spacing:-0.120px;color:#2e2e2e;left:326.5px;">Сок "Алоэ" 240 г...</div><div class="t" style="top:771.0px;font-size:13.5px;line-height:17px;letter-spacing:-0.088px;color:#bdbdbd;left:617.4px;">&lt;серия не указы...</div><div class="t" style="top:771.0px;font-size:13.5px;line-height:17px;letter-spacing:-0.348px;color:#bdbdbd;left:750.4px;">&lt;для работ, оформляемых актом&gt;</div><div class="t" style="top:771.0px;font-size:13.5px;line-height:17px;letter-spacing:-0.150px;color:#2e2e2e;right:461.2px;">5,000</div><div class="t" style="top:771.0px;font-size:13.5px;line-height:17px;letter-spacing:-0.396px;color:#2e2e2e;left:1162.2px;">шт</div><div class="t" style="top:771.0px;font-size:13.5px;line-height:17px;letter-spacing:-0.325px;color:#2e2e2e;left:1322.8px;">&lt;произвольная&gt;</div><div class="t" style="top:771.0px;font-size:13.5px;line-height:17px;letter-spacing:-0.150px;color:#2e2e2e;right:60.4px;">42,00</div><div class="a" style="left:728.5px;top:294.5px;width:252px;height:62px;background:#fff;border:1px solid #a8a8a8;box-shadow:1px 1px 2px rgba(0,0,0,.15)"></div><div class="a" style="left:730.3px;top:296.5px;width:248.5px;height:28.2px;background:#fdce1c"></div><div class="t" style="top:302.0px;font-size:13.5px;line-height:17px;letter-spacing:-0.349px;color:#111;left:772.6px;">Заполнить склад</div><div class="t" style="top:332.0px;font-size:13.5px;line-height:17px;letter-spacing:-0.300px;color:#444;left:772.6px;">Заполнить дату отгрузки</div><div class="a" style="left:988px;top:314px;width:560px;height:367px;background:#fff"></div><div class="a" style="left:988px;top:314px;width:560px;height:22.5px;background:linear-gradient(#f3f3f3 0,#e4e4e4 25%,#cdcdcd 60%,#a9a9ab 100%)"></div><div class="a" style="left:988px;top:336px;width:3px;height:345px;background:linear-gradient(90deg,#e9e9ec,#c4c4cc 50%,#d8d8dc)"></div><svg class="a" style="left:990px;top:316.8px" width="15" height="15" viewBox="0 0 16 16"><circle cx="8" cy="8" r="7.5" fill="url(#g1)" stroke="#e0aa00" stroke-width=".6"/><text x="8.200" y="10.900" font-family="Liberation Sans,sans-serif" font-weight="bold" font-size="8.500" text-anchor="middle" fill="#e00010" textLength="11" lengthAdjust="spacingAndGlyphs">1С</text><path d="M9.500 10.300 H13.300" stroke="#e00010" stroke-width="1.300"/></svg><div class="t" style="top:318.0px;font-size:12px;line-height:15px;letter-spacing:-0.539px;color:#111;left:1017.8px;white-space:pre;">Склады и магазины  (1С:Предприятие)</div><div class="t" style="top:347.0px;font-size:18.67px;line-height:23px;letter-spacing:0.050px;color:#000;left:1001.4px;-webkit-text-stroke:.3px #000;">Склады и магазины</div><div class="btn yb" style="left:1002px;top:384px;width:86px;height:26px;"></div><div class="t" style="top:389.0px;font-size:13.5px;line-height:17px;letter-spacing:-0.279px;color:#000;font-weight:bold;left:1015.7px;">Выбрать</div><div class="btn" style="left:1097px;top:384px;width:167px;height:26px;"></div><div class="t" style="top:389.0px;font-size:13.5px;line-height:17px;letter-spacing:-0.286px;color:#3a3a3a;left:1110.7px;">Создать на основании</div><svg class="a" style="left:1251.3px;top:396.8px" width="6" height="3.5" viewBox="0 0 6 3.5"><path d="M0 0 H6 L3 3.5 Z" fill="#3c3c3c"/></svg><div class="btn" style="left:1273px;top:384px;width:41px;height:26px;"></div><svg class="a" style="left:1301.5px;top:396.8px" width="6" height="3.5" viewBox="0 0 6 3.5"><path d="M0 0 H6 L3 3.5 Z" fill="#3c3c3c"/></svg><div class="inp" style="left:1324px;top:384px;width:224px;height:26px;border-radius:3px 0 0 3px;border-right:none"></div><div class="a" style="left:1543px;top:385.5px;width:1px;height:23.5px;background:#b4b4b4"></div><div class="t" style="top:389.0px;font-size:13.5px;line-height:17px;letter-spacing:-0.166px;color:#c2c2c2;left:1327.2px;">Поиск (Ctrl+F)</div><div class="a" style="left:1002px;top:420px;width:546px;height:32px;background:#f7f3f7;border-top:1px solid #b4b4b4;border-left:1px solid #b4b4b4"></div><div class="a" style="left:1002px;top:452px;width:1px;height:229px;background:#b4b4b4"></div><div class="t" style="top:427.0px;font-size:13.5px;line-height:17px;letter-spacing:-0.452px;color:#3a3a3a;left:1010.7px;">Наименование</div><div class="a" style="left:1003px;top:480px;width:545px;height:145px;background:#fefbfe"></div><div class="a" style="left:1003px;top:452px;width:545px;height:28px;background:#fee794;border-top:2.5px solid #fdc81a;border-bottom:2.5px solid #fdc81a"></div><div class="rl" style="left:1003px;top:509px;width:545px;background:#e6e3e6"></div><div class="rl" style="left:1003px;top:538px;width:545px;background:#e6e3e6"></div><div class="rl" style="left:1003px;top:567px;width:545px;background:#e6e3e6"></div><div class="rl" style="left:1003px;top:596px;width:545px;background:#e6e3e6"></div><div class="rl" style="left:1003px;top:625px;width:545px;background:#e6e3e6"></div><div class="a" style="left:1013.7px;top:462.8px;width:10.5px;height:4.5px;background:linear-gradient(#8fb8e0,#5f93c6);border:1px solid #5b87b5;border-radius:1px"></div><div class="t" style="top:458.0px;font-size:13.5px;line-height:17px;letter-spacing:-0.517px;color:#2e2e2e;left:1034.6px;">Галактика</div><div class="a" style="left:1013.7px;top:491.6px;width:10.5px;height:4.5px;background:linear-gradient(#8fb8e0,#5f93c6);border:1px solid #5b87b5;border-radius:1px"></div><div class="t" style="top:487.0px;font-size:13.5px;line-height:17px;letter-spacing:-0.349px;color:#2e2e2e;left:1034.6px;">Индийские товары</div><div class="a" style="left:1013.7px;top:520.6px;width:10.5px;height:4.5px;background:linear-gradient(#8fb8e0,#5f93c6);border:1px solid #5b87b5;border-radius:1px"></div><div class="t" style="top:516.0px;font-size:13.5px;line-height:17px;letter-spacing:-0.354px;color:#2e2e2e;left:1034.6px;">Китайские товары</div><div class="a" style="left:1013.7px;top:549.6px;width:10.5px;height:4.5px;background:linear-gradient(#8fb8e0,#5f93c6);border:1px solid #5b87b5;border-radius:1px"></div><div class="t" style="top:545.0px;font-size:13.5px;line-height:17px;letter-spacing:-0.261px;color:#2e2e2e;left:1034.6px;">Основной склад</div><div class="a" style="left:1013.7px;top:578.6px;width:10.5px;height:4.5px;background:linear-gradient(#8fb8e0,#5f93c6);border:1px solid #5b87b5;border-radius:1px"></div><div class="t" style="top:574.0px;font-size:13.5px;line-height:17px;letter-spacing:-0.160px;color:#2e2e2e;left:1034.6px;">Продмикс</div><div class="a" style="left:1013.7px;top:607.6px;width:10.5px;height:4.5px;background:linear-gradient(#8fb8e0,#5f93c6);border:1px solid #5b87b5;border-radius:1px"></div><div class="t" style="top:603.0px;font-size:13.5px;line-height:17px;letter-spacing:-0.146px;color:#2e2e2e;left:1034.6px;">Развесной</div><div class="a" style="left:1165px;top:426px;width:141.5px;height:23px;background:#ffffe1;border:1px solid #9a9a88"></div><div class="t" style="top:429.0px;font-size:13.5px;line-height:17px;letter-spacing:-0.313px;color:#000;left:1168.7px;">Создать на основании</div><div class="a" style="left:1000.3px;top:451.8px;width:158.6px;height:198.6px;border:4.8px solid #ed1c24"></div><div class="t" style="top:487.0px;font-size:17.5px;line-height:22px;letter-spacing:0.747px;color:#ed1c24;left:1196.8px;">Это элементы, а не группа складов.</div><div class="t" style="top:513.0px;font-size:17.5px;line-height:22px;letter-spacing:0.842px;color:#ed1c24;left:1196.8px;">выбирая любой, он и заполнится, вне</div><div class="t" style="top:538.0px;font-size:17.5px;line-height:22px;letter-spacing:0.745px;color:#ed1c24;left:1196.8px;">зависимости есть на нем товар или нет</div><div class="a" style="left:0px;top:781.5px;width:1606px;height:2.5px;background:#fffdf6"></div><div class="a" style="left:52px;top:781.5px;width:9px;height:2.5px;background:#4db4e8"></div><div class="a" style="left:61px;top:781.5px;width:10px;height:2.5px;background:#fff"></div><svg class="a" style="left:1118px;top:0" width="300" height="20" viewBox="0 0 300 20">
<g fill="none" stroke="#aab6c6" stroke-width="1">
<path d="M1.5 3.5 H14.5 V16.5 H1.5 Z" fill="#c6cfda"/><path d="M4 3.5 V8.5 H12 V3.5" fill="#d5dce4"/><path d="M4.5 16.5 V12 H11.5 V16.5" fill="#cfd8d6"/><path d="M6 13.5 V15.5" />
<path d="M27.5 7 V3.5 H33.5 L35.5 5.5 V7" fill="#d3dae2"/><rect x="24.5" y="8" width="14" height="6" rx="1.5" fill="#bcc6d2"/><rect x="27.5" y="12" width="8" height="4.5" fill="#dfe4ea"/>
<path d="M48.500 3.5 H55.500 L59.500 7.500 V16.5 H48.500 Z" fill="#d0d8e0"/><circle cx="56" cy="11.5" r="3.2" fill="#e6eaee" stroke-width="1.4"/><path d="M58.500 14 L61.500 17" stroke-width="1.8"/>
</g>
<path d="M68.500 0 V16" stroke="#c9c9c9"/><path d="M69.500 0 V16" stroke="#f2f2f2"/>
<g fill="#fff" stroke="#6a6a6a" stroke-width="1"><rect x="75" y="11" width="9" height="5" rx="1.5"/><rect x="81.500" y="11" width="9" height="5" rx="1.5"/><rect x="98" y="11" width="9" height="5" rx="1.5"/><rect x="104.500" y="11" width="9" height="5" rx="1.5"/></g>
<g stroke="#6a6a6a" stroke-width="1"><path d="M77.500 13.500 H88"/><path d="M100.500 13.500 H111"/></g>
<path d="M79 4.500 H83.500 V2.200 L88 5.700 L83.500 9.200 V7 H79 Z" fill="#2fd12f" stroke="#158a15" stroke-width=".8"/>
<path d="M100.500 11 V3.500 H107.500 L111 7 V11" fill="#fff" stroke="#6a6a6a"/><path d="M107.500 3.500 V7 H111" fill="none" stroke="#6a6a6a"/>
<path d="M119.500 0 V16" stroke="#c9c9c9"/><path d="M120.500 0 V16" stroke="#f2f2f2"/>
<rect x="126" y="3" width="11.500" height="14" rx="1" fill="#eef1f4" stroke="#7b8a9a"/><rect x="126.500" y="3.500" width="10.500" height="3.500" fill="#4fd05a"/>
<g fill="#555"><rect x="128" y="8.500" width="1.500" height="1.500"/><rect x="131" y="8.500" width="1.500" height="1.500"/><rect x="128" y="11" width="1.500" height="1.500"/><rect x="131" y="11" width="1.500" height="1.500"/><rect x="134" y="11" width="1.500" height="1.500"/><rect x="128" y="13.500" width="1.500" height="1.500"/><rect x="131" y="13.500" width="1.500" height="1.500"/><rect x="134" y="13.500" width="1.500" height="1.500"/></g><rect x="134" y="8" width="1.500" height="2.200" fill="#f03030"/>
<rect x="149.500" y="3.500" width="12" height="13" rx="1" fill="#fff" stroke="#7b8a9a"/><path d="M149.500 7 V4.500 Q149.500 3.500 150.500 3.500 H160.500 Q161.500 3.500 161.500 4.500 V7 Z" fill="#e0935a" stroke="#c77a42"/><path d="M152.500 1.800 V4 M158.500 1.800 V4" stroke="#c77a42" stroke-width="1.200"/>
<text x="155.500" y="14.500" font-size="8.500" text-anchor="middle" fill="#666" font-family="Liberation Sans,sans-serif">31</text>
<path d="M171 0 V16" stroke="#c9c9c9"/><path d="M172 0 V16" stroke="#f2f2f2"/>
<g font-family="Liberation Sans,sans-serif" font-weight="bold" font-size="12.500" fill="#8a5528"><text x="179" y="15" textLength="9.500" lengthAdjust="spacingAndGlyphs">M</text><text x="199" y="15" textLength="16" lengthAdjust="spacingAndGlyphs">M+</text><text x="222" y="15" textLength="15" lengthAdjust="spacingAndGlyphs">M-</text></g>
<path d="M244.500 0 V16" stroke="#c9c9c9"/><path d="M245.500 0 V16" stroke="#f2f2f2"/>
<circle cx="258" cy="9.500" r="5.800" fill="#fff" stroke="#222" stroke-width="1.300"/><path d="M255 9.500 H261 M258 6.500 V12.500" stroke="#111" stroke-width="1.400"/><path d="M262.300 13.800 L265.500 17" stroke="#333" stroke-width="2"/>
<rect x="275" y="2.500" width="14" height="14" rx="1" fill="#fff" stroke="#4a8fd6"/><rect x="275" y="2.500" width="14" height="2.500" fill="#3d9df2"/><path d="M282 5 V16.500" stroke="#4a8fd6"/>
<path d="M296 0 V16" stroke="#c9c9c9"/><path d="M297 0 V16" stroke="#f2f2f2"/>
</svg><svg class="a" style="left:1420px;top:4px" width="10" height="10" viewBox="0 0 12 12"><circle cx="6" cy="3.400" r="2.800" fill="#555"/><path d="M0.800 11.500 C0.800 7.500 3 6.500 6 6.500 C9 6.500 11.200 7.500 11.200 11.500 Z" fill="#555"/></svg><div class="t" style="top:3.0px;font-size:12px;line-height:15px;letter-spacing:-0.512px;color:#2a2410;left:1432.3px;">Администратор</div><div class="a" style="left:1516px;top:0px;width:1px;height:16px;background:#c9c9c9;box-shadow:1px 0 0 #f2f2f2"></div><svg class="a" style="left:1521px;top:1px" width="18" height="18" viewBox="0 0 18 18"><defs><radialGradient id="g3" cx=".4" cy=".3" r=".8"><stop offset="0" stop-color="#ffe08a"/><stop offset="1" stop-color="#eea228"/></radialGradient></defs><circle cx="9" cy="9" r="8" fill="url(#g3)" stroke="#c99030" stroke-width="1"/><text x="9" y="13.500" font-family="Liberation Serif,serif" font-style="italic" font-weight="bold" font-size="13" text-anchor="middle" fill="#555">i</text></svg><svg class="a" style="left:1544px;top:12px" width="9" height="4" viewBox="0 0 9 4"><path d="M0 0 H9 L4.500 4 Z" fill="#444"/></svg><div class="a" style="left:1556px;top:0px;width:1px;height:16px;background:#c9c9c9;box-shadow:1px 0 0 #f2f2f2"></div><div class="a" style="left:1566px;top:12px;width:7px;height:2px;background:#333"></div><svg class="a" style="left:1585px;top:4px" width="13" height="11" viewBox="0 0 13 11"><path d="M3.500 3 V0.800 H12 V7 H9.500" fill="none" stroke="#333" stroke-width="1.400"/><rect x="1" y="3.700" width="8.500" height="6.300" fill="none" stroke="#333" stroke-width="1.400"/></svg><svg class="a" style="left:417.5px;top:167.5px" width="15" height="15" viewBox="0 0 15 15"><path d="M1 1 H13 L14 2 V14 H2.200 L1 12.800 Z" fill="#6c9de4" stroke="#3b69b4" stroke-width="1"/><rect x="3.500" y="1.500" width="8" height="5.500" fill="#f4f8fd"/><path d="M4.500 3.300 H10.500 M4.500 5.200 H10.500" stroke="#8fb2e6" stroke-width=".9"/><rect x="3.500" y="9.500" width="8" height="4.500" fill="#d6d6d6" stroke="#3b69b4" stroke-width=".6"/><rect x="5" y="10.500" width="2" height="3" fill="#3b69b4"/></svg><svg class="a" style="left:455.5px;top:166.5px" width="17" height="17" viewBox="0 0 17 17"><rect x="0.500" y="1" width="12" height="13" fill="#fbfcfe" stroke="#6b86ad" stroke-width="1"/><path d="M2.500 3.500 H7 M2.500 5.800 H7 M2.500 8.100 H7 M2.500 10.400 H7" stroke="#9db3d0" stroke-width=".9"/><path d="M6.500 0.800 H12.300 Q13.800 0.800 13.800 2.500 V4.500 H16 L12.300 9 L8.600 4.500 H10.800 V3.600 H6.500 Z" fill="#2fd077" stroke="#17a553" stroke-width=".8"/><path d="M8 10.500 V15 Q11.300 16.800 14.600 15 V10.500 Z" fill="#f6d24a" stroke="#d8ad1c" stroke-width=".7"/><ellipse cx="11.300" cy="10.500" rx="3.300" ry="1.200" fill="#fbe88a" stroke="#d8ad1c" stroke-width=".7"/><path d="M8 12.700 Q11.300 14.400 14.600 12.700" fill="none" stroke="#d8ad1c" stroke-width=".6"/></svg><svg class="a" style="left:494.5px;top:166.5px" width="17" height="17" viewBox="0 0 17 17"><rect x="0.500" y="0.500" width="8.500" height="9.500" fill="#f4f7fb" stroke="#6b86ad" stroke-width="1"/><path d="M2.300 2.800 H7 M2.300 4.600 H7" stroke="#a9bcd6" stroke-width=".8"/><rect x="7.500" y="6.500" width="8.500" height="9.500" fill="#f4f7fb" stroke="#6b86ad" stroke-width="1"/><path d="M11 11.500 H14.500 M11 13.400 H14.500" stroke="#a9bcd6" stroke-width=".8"/><path d="M3.300 5.300 H6.300 V8.300 Q6.300 9.300 7.300 9.300 H8.500 V7.200 L12.600 10.800 L8.500 14.400 V12.300 H6.300 Q3.300 12.300 3.300 9.300 Z" fill="#2fd077" stroke="#17a553" stroke-width=".8"/></svg><svg class="a" style="left:546.5px;top:167.5px" width="15" height="15" viewBox="0 0 15 15"><path d="M3.500 5 V0.700 H9.300 L11.500 2.900 V5" fill="#fff" stroke="#5878a0" stroke-width="1"/><rect x="0.600" y="5" width="13.800" height="6.200" rx="1.600" fill="#3f6da0" stroke="#2c5584" stroke-width=".8"/><rect x="3.500" y="9" width="8" height="5.300" fill="#fff" stroke="#5878a0" stroke-width="1"/><rect x="11.300" y="6.500" width="1.500" height="1" fill="#dfe8f3"/></svg><svg class="a" style="left:843.8px;top:166.8px" width="17" height="17" viewBox="0 0 17 17"><path d="M5 0.700 H12.700 L15.800 3.800 V13 H5 Z" fill="#f7f9fc" stroke="#7d96b6" stroke-width="1"/><path d="M12 5 V9.500" stroke="#3cc03c" stroke-width="1.600"/><path d="M0.700 2.800 H8.200 L11 5.600 V15.800 H0.700 Z" fill="#f7f9fc" stroke="#7d96b6" stroke-width="1"/><path d="M8.200 2.800 V5.600 H11" fill="#dfe6ef" stroke="#7d96b6" stroke-width=".8"/><path d="M2.500 4.500 V11.300 H9.500" fill="none" stroke="#777" stroke-width=".7"/><path d="M4.400 5.600 V10.800" stroke="#f0402a" stroke-width="1.700"/><path d="M7.400 7 V10.800" stroke="#3cc03c" stroke-width="1.700"/></svg><svg class="a" style="left:363.5px;top:275px" width="12" height="12" viewBox="0 0 12 12"><path d="M6 0.600 L11.300 6.300 H8.200 V11.300 H3.800 V6.300 H0.700 Z" fill="#2fa4ea" stroke="#1b7dc2" stroke-width="1" stroke-linejoin="round"/></svg><svg class="a" style="left:392.3px;top:275px" width="12" height="12" viewBox="0 0 12 12"><path d="M6 11.400 L11.300 5.700 H8.200 V0.700 H3.800 V5.700 H0.700 Z" fill="#2fa4ea" stroke="#1b7dc2" stroke-width="1" stroke-linejoin="round"/></svg><svg class="a" style="left:442.5px;top:273.5px" width="16" height="15" viewBox="0 0 16 15"><path d="M0.700 0.700 H6.500 L9 3.200 V10.700 H0.700 Z" fill="#f6f9fc" stroke="#7ba6cf" stroke-width="1"/><path d="M5 3.500 H11.300 L14 6.200 V14.300 H5 Z" fill="#f6f9fc" stroke="#7ba6cf" stroke-width="1"/><path d="M2 4.500 H4.500 M2 6.500 H4.500 M2 8.500 H4.500" stroke="#9dbbd8" stroke-width=".8"/><path d="M6.800 7.500 H12.300 M6.800 9.500 H12.300 M6.800 11.500 H12.300" stroke="#7ba6cf" stroke-width=".9"/></svg><svg class="a" style="left:481.5px;top:274px" width="16" height="16" viewBox="0 0 16 16"><rect x="0.700" y="1.800" width="11" height="12.400" rx="1" fill="#c9beb4" stroke="#b5a99d" stroke-width=".8"/><rect x="3.700" y="0.500" width="5" height="2.600" rx="1" fill="#c2c9d2" stroke="#a4adb8" stroke-width=".7"/><path d="M6.500 6.300 H11.600 L14.300 9 V15.300 H6.500 Z" fill="#ccd8e4" stroke="#a2b7cc" stroke-width=".9"/><path d="M8 10 H12.700 M8 11.800 H12.700 M8 13.600 H12.700" stroke="#a2b7cc" stroke-width=".8"/></svg><svg class="a" style="left:519.5px;top:272.5px" width="16" height="16" viewBox="0 0 16 16"><path d="M0.800 8 H3.500 C6.500 8 6.500 3.900 9.500 3.900 H11.500 M3.500 8 C6.500 8 6.500 12.100 9.500 12.100 H11.500" fill="none" stroke="#2b8fd8" stroke-width="3.200"/><path d="M10.800 0.800 L14.800 3.900 L10.800 7 Z M10.800 9 L14.800 12.100 L10.800 15.200 Z" fill="#9ad6f7" stroke="#2b8fd8" stroke-width="1" stroke-linejoin="miter"/><path d="M0.800 8 H3.500 C6.500 8 6.500 3.900 9.500 3.900 H11.500 M3.500 8 C6.500 8 6.500 12.100 9.500 12.100 H11.500" fill="none" stroke="#9ad6f7" stroke-width="1.400"/></svg><svg class="a" style="left:570px;top:273px" width="16" height="17" viewBox="0 0 16 17"><path d="M1.500 1.200 V11.700 M6.500 1.200 V7.500 M10.500 1.200 V7 M14.500 1.200 V11.700" stroke="#2a2a2a" stroke-width="1"/><path d="M3.750 1.200 V10 M8.500 1.200 V6 M12.500 1.200 V8.500" stroke="#222" stroke-width="1.500"/><circle cx="8.600" cy="10.500" r="3.300" fill="#bcd8f8" stroke="#c79a6e" stroke-width="1"/><path d="M11.200 13.100 L13.400 15.200" stroke="#cf8e50" stroke-width="1.900" stroke-linecap="round"/></svg><svg class="a" style="left:1280px;top:389px" width="15.5" height="15.5" viewBox="0 0 17 17"><rect x="0.500" y="0.500" width="8.500" height="9.500" fill="#f4f7fb" stroke="#6b86ad" stroke-width="1"/><path d="M2.300 2.800 H7 M2.300 4.600 H7" stroke="#a9bcd6" stroke-width=".8"/><rect x="7.500" y="6.500" width="8.500" height="9.500" fill="#f4f7fb" stroke="#6b86ad" stroke-width="1"/><path d="M11 11.500 H14.500 M11 13.400 H14.500" stroke="#a9bcd6" stroke-width=".8"/><path d="M3.300 5.300 H6.300 V8.300 Q6.300 9.300 7.300 9.300 H8.500 V7.200 L12.600 10.800 L8.500 14.400 V12.300 H6.300 Q3.300 12.300 3.300 9.300 Z" fill="#2fd077" stroke="#17a553" stroke-width=".8"/></svg><svg class="a" style="left:1500px;top:317px" width="48" height="17" viewBox="0 0 48 17"><g fill="#d5dbe3" stroke="#a9b6c6" stroke-width="1"><path d="M3.500 8 V1.700 H10 L13 4.700 V8"/><rect x="0.700" y="8.500" width="7.500" height="5" rx="1.500"/><rect x="7.700" y="8.500" width="7.500" height="5" rx="1.500"/></g><path d="M3 11 H13" stroke="#a9b6c6"/><path d="M22.500 0 V15" stroke="#bdbdbd"/><path d="M23.500 0 V15" stroke="#ececec"/><rect x="28.800" y="0.800" width="11.500" height="14" rx="1" fill="#eef1f4" stroke="#7b8a9a"/><rect x="29.300" y="1.300" width="10.500" height="3.500" fill="#4fd05a"/><g fill="#555"><rect x="31" y="6.300" width="1.500" height="1.500"/><rect x="34" y="6.300" width="1.500" height="1.500"/><rect x="31" y="8.800" width="1.500" height="1.500"/><rect x="34" y="8.800" width="1.500" height="1.500"/><rect x="37" y="8.800" width="1.500" height="1.500"/><rect x="31" y="11.300" width="1.500" height="1.500"/><rect x="34" y="11.300" width="1.500" height="1.500"/><rect x="37" y="11.300" width="1.500" height="1.500"/></g><rect x="37" y="5.800" width="1.500" height="2.200" fill="#f03030"/></svg></body></html>
